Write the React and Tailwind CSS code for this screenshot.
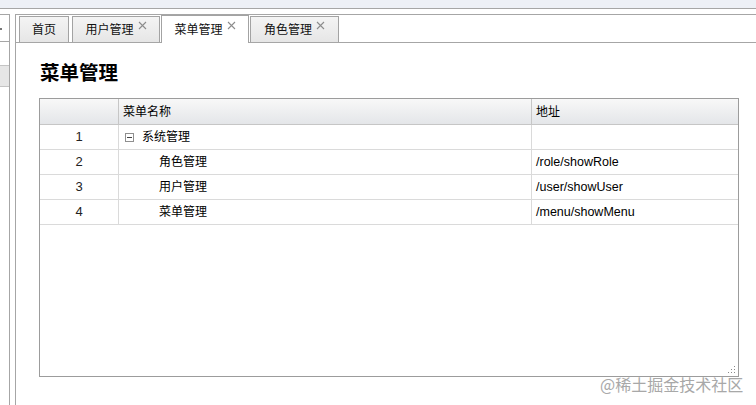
import React from 'react';

const font = { fontFamily: '"Liberation Sans", "Noto Sans CJK SC", sans-serif' };

const tabs = [
  { label: '首页', width: 'w-[50px]', closable: false, gap: 'ml-0' },
  { label: '用户管理', width: 'w-[88px]', closable: true, gap: 'ml-[3px]' },
  { label: '菜单管理', width: 'w-[88px]', closable: true, gap: 'ml-[1px]', active: true },
  { label: '角色管理', width: 'w-[89px]', closable: true, gap: 'ml-[1px]' },
];

const rows = [
  { no: 1, name: '系统管理', url: '', parent: true },
  { no: 2, name: '角色管理', url: '/role/showRole' },
  { no: 3, name: '用户管理', url: '/user/showUser' },
  { no: 4, name: '菜单管理', url: '/menu/showMenu' },
];

const CloseX = () => (
  <svg className="ml-[4px] mb-[9px]" width="9" height="9" viewBox="0 0 9 9">
    <path d="M1 1L8 8M8 1L1 8" stroke="#8c8c8c" strokeWidth="1.1" />
  </svg>
);

const Tab = ({ tab }) => (
  <div
    className={`${tab.width} ${tab.gap} flex items-center justify-center border-l border-t border-r border-[#a3a3a3] text-[12px] text-[#111] ${
      tab.active ? 'h-[28px] -mb-px bg-white' : 'h-[26px] bg-gradient-to-b from-[#f4f4f4] to-[#e6e6e6]'
    }`}
  >
    <span className="leading-none pt-[1px]">{tab.label}</span>
    {tab.closable && <CloseX />}
  </div>
);

const App = () => {
  return (
    <div className="relative w-[756px] h-[405px] overflow-hidden bg-white" style={font}>
      <div className="h-[9px] bg-[#edf0f6] border-b border-[#a6a6a6]" />

      <div className="flex mt-[5px] h-[391px]">
        {/* left nav panel, mostly cut off */}
        <div className="w-[10px] border-t border-r border-[#a6a6a6] flex flex-col">
          <div className="h-[27px] border-b border-[#a6a6a6] flex items-center">
            <span className="block w-[2px] h-[2px] mt-[1px] bg-[#777]" />
          </div>
          <div className="mt-[23px] h-[22px] bg-[#e6e6e6] border-t border-b border-[#c4c4c4]" />
        </div>

        {/* main panel */}
        <div className="ml-[5px] flex-1 border-t border-l border-[#a6a6a6] flex flex-col">
          <div className="h-[28px] flex items-end pl-[3px] border-b border-[#a6a6a6]">
            {tabs.map((t) => (
              <Tab key={t.label} tab={t} />
            ))}
          </div>

          <div className="pl-[23px] pt-[17px]">
            <h1 className="ml-[1px] text-[19.5px] font-bold leading-[26px] text-black">菜单管理</h1>

            <div className="relative mt-[12px] w-[700px] h-[279px] border border-[#9c9c9c] text-[12px] text-black">
              <div className="flex h-[26px] bg-gradient-to-b from-[#f8f8f8] to-[#e4e6e9] border-b border-[#c6c6c6]">
                <div className="w-[79px] border-r border-[#c6c6c6]" />
                <div className="w-[413px] border-r border-[#c6c6c6] flex items-center pl-[4px]">菜单名称</div>
                <div className="flex-1 flex items-center pl-[4px]">地址</div>
              </div>

              {rows.map((r) => (
                <div key={r.no} className="flex h-[25px] border-b border-[#dadada]">
                  <div className="w-[79px] border-r border-[#dadada] flex items-center justify-center text-[13px] text-[#222]">{r.no}</div>
                  <div className="w-[413px] border-r border-[#dadada] flex items-center">
                    {r.parent ? (
                      <>
                        <span className="ml-[6px] w-[9px] h-[9px] border border-[#8f8f8f] bg-white flex items-center justify-center">
                          <span className="block w-[5px] h-px bg-[#444]" />
                        </span>
                        <span className="ml-[8px]">{r.name}</span>
                      </>
                    ) : (
                      <span className="ml-[40px]">{r.name}</span>
                    )}
                  </div>
                  <div className="flex-1 flex items-center pl-[4px] text-[12.5px]">{r.url}</div>
                </div>
              ))}

              <svg className="absolute right-[1px] bottom-[1px]" width="10" height="10" viewBox="0 0 10 10">
                <g fill="#8a8a8a">
                  <rect x="7" y="1" width="1" height="1" />
                  <rect x="4" y="4" width="1" height="1" />
                  <rect x="7" y="4" width="1" height="1" />
                  <rect x="1" y="7" width="1" height="1" />
                  <rect x="4" y="7" width="1" height="1" />
                  <rect x="7" y="7" width="1" height="1" />
                </g>
              </svg>
            </div>
          </div>
        </div>
      </div>

      <div className="absolute left-[600px] top-[374px] text-[16px] leading-[20px] text-[#a8a8a8] whitespace-nowrap" style={{ fontFamily: '"Noto Sans CJK SC", sans-serif' }}>
        @稀土掘金技术社区
      </div>
    </div>
  );
};

export default App;
